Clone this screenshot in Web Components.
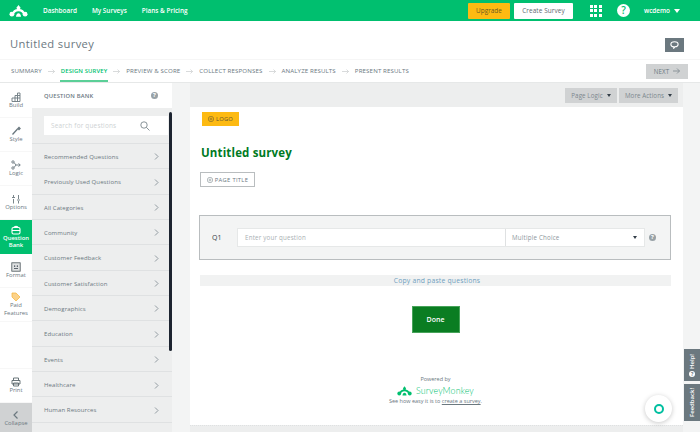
<!DOCTYPE html>
<html>
<head>
<meta charset="utf-8">
<title>Untitled survey</title>
<style>
  html, body { margin: 0; padding: 0; height: 432px; overflow: hidden; background: #fff; }
  body { font-family: "Open Sans", "Liberation Sans", sans-serif; color: #6b787f; }
</style>
</head>
<body>
<sm-app></sm-app>
<script>
const MONKEY = `<path d="M6 15c1-5 4-7 9-7s8 2 9 7" fill="none" stroke="currentColor" stroke-width="3.500"/><circle cx="4.500" cy="14.500" r="3.800" fill="currentColor"/><circle cx="25.500" cy="14.500" r="3.800" fill="currentColor"/><path d="M15 0l3 4-1 5h-4l-1-5z" fill="currentColor"/><path d="M11 18.500c0-3 2-5.500 4-5.500s4 2.500 4 5.500z" fill="currentColor"/>`;

function define(name, html, setup) {
  const tpl = document.createElement('template');
  tpl.innerHTML = html;
  customElements.define(name, class extends HTMLElement {
    constructor() {
      super();
      this.attachShadow({ mode: 'open' }).appendChild(tpl.content.cloneNode(true));
    }
    connectedCallback() {
      if (setup) setup(this);
    }
  });
}

define('sm-topbar', `
<style>
  :host { display: flex; align-items: center; height: 21px; background: #00bf6f; color: #fff; font-size: 6.400px; font-weight: 600; }
  svg.logo { width: 19px; height: 12px; margin-left: 9px; color: #fff; }
  nav { display: flex; gap: 15px; margin-left: 15px; }
  .right { margin-left: auto; display: flex; align-items: center; }
  .up { width: 42px; height: 16px; background: #fdba12; color: #6b5a20; border-radius: 1px; display: flex; align-items: center; justify-content: center; font-weight: 400; }
  .cs { width: 59px; height: 16px; margin-left: 4px; background: #fff; color: #5c686e; border-radius: 1px; display: flex; align-items: center; justify-content: center; font-weight: 400; letter-spacing: .1px; }
  .apps { display: grid; grid-template-columns: repeat(3, 3px); gap: 1.500px; margin-left: 17px; }
  .apps i { width: 3px; height: 3px; background: #fff; }
  .q { width: 13px; height: 13px; border-radius: 50%; background: #fff; color: #00bf6f; font-size: 10px; line-height: 13px; text-align: center; margin-left: 15px; }
  .user { margin-left: 14px; margin-right: 20px; display: flex; align-items: center; gap: 4px; }
  .user b { width: 0; height: 0; border: 3px solid transparent; border-top: 4px solid #fff; border-bottom: 0; }
</style>
<svg class="logo" viewBox="0 0 30 19">${MONKEY}</svg>
<nav><span>Dashboard</span><span>My Surveys</span><span>Plans &amp; Pricing</span></nav>
<div class="right">
  <div class="up">Upgrade</div>
  <div class="cs">Create Survey</div>
  <div class="apps"><i></i><i></i><i></i><i></i><i></i><i></i><i></i><i></i><i></i></div>
  <div class="q">?</div>
  <div class="user">wcdemo <b></b></div>
</div>`);

define('sm-titlebar', `
<style>
  :host { display: flex; height: 38px; background: #fff; box-sizing: border-box; padding: 0 16px 0 10px; justify-content: space-between; align-items: center; }
  h1 { margin: 6px 0 0; font-size: 11.200px; font-weight: 400; color: #6b787f; letter-spacing: .35px; }
  button { all: unset; width: 19px; height: 14px; margin-top: 10px; background: #6b787f; display: flex; align-items: center; justify-content: center; }
  svg { width: 9px; height: 8px; }
</style>
<h1>Untitled survey</h1>
<button><svg viewBox="0 0 12 11" fill="none" stroke="#fff" stroke-width="1.500"><path d="M6 1c3 0 5 1.500 5 3.500S9 8 6.500 8L5 10V8C3 8 1 6.500 1 4.500S3 1 6 1z"/></svg></button>`);

define('sm-steps', `
<style>
  :host { display: flex; align-items: stretch; height: 24px; background: #fff; box-sizing: border-box; border-top: 1px solid #f6f6f6; border-bottom: 1px solid #e6e8e8; padding-left: 11px; font-size: 6.150px; color: #6b787f; font-weight: 400; }
  span { display: flex; align-items: center; letter-spacing: .12px; white-space: nowrap; padding-bottom: 1px; box-sizing: border-box; }
  .on { color: #00bf6f; font-weight: 600; font-size: 5.900px; box-shadow: inset 0 -2px 0 #5bcf97; margin: 0 -1px; padding: 0 1px 1px; }
  svg { width: 7px; height: 5px; margin: 0 6px; align-self: center; }
  .next { margin-left: auto; margin-right: 12px; align-self: center; padding: 0; width: 42px; height: 15px; background: #d0d2d3; justify-content: center; gap: 4px; font-size: 6.200px; color: #6b787f; }
  .next svg { margin: 0; width: 7px; height: 6px; }
</style>
<span>SUMMARY</span><svg viewBox="0 0 7 5" fill="none" stroke="#c8cccd" stroke-width=".7"><path d="M0 2.500h6.500M4.500.5l2 2-2 2"/></svg>
<span class="on">DESIGN SURVEY</span><svg viewBox="0 0 7 5" fill="none" stroke="#c8cccd" stroke-width=".7"><path d="M0 2.500h6.500M4.500.5l2 2-2 2"/></svg>
<span>PREVIEW &amp; SCORE</span><svg viewBox="0 0 7 5" fill="none" stroke="#c8cccd" stroke-width=".7"><path d="M0 2.500h6.500M4.500.5l2 2-2 2"/></svg>
<span>COLLECT RESPONSES</span><svg viewBox="0 0 7 5" fill="none" stroke="#c8cccd" stroke-width=".7"><path d="M0 2.500h6.500M4.500.5l2 2-2 2"/></svg>
<span>ANALYZE RESULTS</span><svg viewBox="0 0 7 5" fill="none" stroke="#c8cccd" stroke-width=".7"><path d="M0 2.500h6.500M4.500.5l2 2-2 2"/></svg>
<span>PRESENT RESULTS</span>
<span class="next">NEXT <svg viewBox="0 0 7 6" fill="none" stroke="#7b878d" stroke-width=".8"><path d="M0 3h6.500M4 .5L6.500 3 4 5.500"/></svg></span>`);

define('sm-rail-item', `
<style>
  :host { display: flex; flex-direction: column; align-items: center; justify-content: center; height: 34px; box-sizing: border-box; border-bottom: 1px solid #f7f7f7; font-size: 5.900px; line-height: 7.500px; text-align: center; color: #6b787f; background: #fff; }
  :host([active]) { background: #00bf6f; color: #fff; font-weight: 600; border: 0; }
  :host([collapse]) { background: #d0d2d3; height: 29px; border: 0; margin-top: auto; padding-top: 2px; }
  ::slotted(svg) { width: 10px; height: 10px; margin-bottom: 0; }
</style>
<slot name="icon"></slot><slot></slot>`);

define('sm-rail', `
<style>
  :host { display: flex; flex-direction: column; width: 32px; flex: none; background: #fff; padding-top: 1px; box-sizing: border-box; }
  .gap { flex: 1; border-bottom: 1px solid #f7f7f7; }
</style>
<sm-rail-item><svg slot="icon" viewBox="0 0 10 10" fill="none" stroke="#6b787f" stroke-width=".9"><path d="M1 9.500V6h3V3.500h2.500V1H9v8.500zM4 6v3.500M6.500 3.500v6M4 6h5M6.500 3.500H9"/></svg>Build</sm-rail-item>
<sm-rail-item><svg slot="icon" viewBox="0 0 10 10" fill="none" stroke="#6b787f" stroke-width="1.300"><path d="M1.500 8.500l5-5.500M7 2.500l1-1 1 1-1 1z"/></svg>Style</sm-rail-item>
<sm-rail-item><svg slot="icon" viewBox="0 0 10 10" fill="none" stroke="#6b787f" stroke-width=".9"><circle cx="2" cy="2" r="1.200"/><circle cx="2" cy="8" r="1.200"/><path d="M3 2.500L5 5 3 7.500M5 5h4M7.500 3.500L9.300 5 7.500 6.500"/></svg>Logic</sm-rail-item>
<sm-rail-item><svg slot="icon" viewBox="0 0 10 10" fill="none" stroke="#6b787f" stroke-width=".9"><path d="M2.500 1v2M1 3.500h3M2.500 5v4.500M7.500 1v4M6 6h3M7.500 7v2.500"/></svg>Options</sm-rail-item>
<sm-rail-item active><svg slot="icon" viewBox="0 0 10 10" fill="none" stroke="#fff" stroke-width="1.100"><rect x="1" y="2.500" width="8" height="6.500" rx="1.500"/><path d="M1 5.500h8M3 2.500C3 1 7 1 7 2.500"/></svg>Question<br>Bank</sm-rail-item>
<sm-rail-item><svg slot="icon" viewBox="0 0 10 10"><rect x=".8" y=".8" width="8.400" height="8.400" fill="#dfe1e2" stroke="#4b565b" stroke-width=".8"/><path d="M3 3.500h1.200v1.200H3zM5.800 3.500H7v1.200H5.800zM3 6.300h4v.8H3z" fill="#333e48"/></svg>Format</sm-rail-item>
<sm-rail-item><svg slot="icon" viewBox="0 0 10 10"><path d="M1 1h4l4 4-4 4-4-4z" fill="#fbd28a" stroke="#f5b335" stroke-width=".7"/></svg>Paid<br>Features</sm-rail-item>
<div class="gap"></div>
<sm-rail-item><svg slot="icon" viewBox="0 0 10 10" fill="none" stroke="#5a666c" stroke-width=".9"><path d="M2.500 3.500V1h5v2.500M1 3.500h8V7H1zM2.500 6h5v3h-5z"/></svg>Print</sm-rail-item>
<sm-rail-item collapse><svg slot="icon" viewBox="0 0 10 10" fill="none" stroke="#6b787f" stroke-width="1.200"><path d="M6.500 1.500L3 5l3.500 3.500"/></svg>Collapse</sm-rail-item>`);

define('sm-bank-row', `
<style>
  :host { display: flex; align-items: center; justify-content: space-between; flex: none; height: 25.350px; box-sizing: border-box; border-bottom: 1px solid #dfe1e2; padding: 1.500px 13px 0 12px; font-size: 6px; color: #6b787f; letter-spacing: .1px; }
  svg { width: 5px; height: 7px; }
</style>
<slot></slot>
<svg viewBox="0 0 5 7" fill="none" stroke="#7b878d" stroke-width=".8"><path d="M1 .5l3 3-3 3"/></svg>`);

define('sm-bank', `
<style>
  :host { display: flex; flex-direction: column; width: 140px; flex: none; background: #edeeee; position: relative; overflow: hidden; }
  header { flex: none; height: 25px; box-sizing: border-box; background: #fff; display: flex; align-items: center; justify-content: space-between; padding: 0 14px 0 12px; font-size: 5.800px; font-weight: 600; color: #6b787f; letter-spacing: .2px; }
  header i { width: 7px; height: 7px; border-radius: 50%; background: #98a1a6; color: #fff; font: 700 6px/7px "Open Sans", sans-serif; text-align: center; }
  .search { flex: none; height: 36px; box-sizing: border-box; border-bottom: 1px solid #dfe1e2; padding: 8px 0 8px 12px; }
  .box { height: 19px; margin-right: 4px; background: #fff; display: flex; align-items: center; justify-content: space-between; padding: 0 18px 0 7px; font-size: 6.400px; color: #ced2d3; letter-spacing: .2px; }
  .box svg { width: 10px; height: 10px; }
  .thumb { position: absolute; right: 0; top: 29px; width: 3px; height: 239px; background: #1c2430; border-radius: 2px; z-index: 1; }
</style>
<header>QUESTION BANK <i>?</i></header>
<div class="search"><div class="box">Search for questions <svg viewBox="0 0 10 10" fill="none" stroke="#6b787f" stroke-width=".8"><circle cx="4" cy="4" r="3.200"/><path d="M6.400 6.400L9.500 9.500"/></svg></div></div>
<sm-bank-row>Recommended Questions</sm-bank-row>
<sm-bank-row>Previously Used Questions</sm-bank-row>
<sm-bank-row>All Categories</sm-bank-row>
<sm-bank-row>Community</sm-bank-row>
<sm-bank-row>Customer Feedback</sm-bank-row>
<sm-bank-row>Customer Satisfaction</sm-bank-row>
<sm-bank-row>Demographics</sm-bank-row>
<sm-bank-row>Education</sm-bank-row>
<sm-bank-row>Events</sm-bank-row>
<sm-bank-row>Healthcare</sm-bank-row>
<sm-bank-row>Human Resources</sm-bank-row>
<div class="thumb"></div>`);

define('sm-question', `
<style>
  :host { display: flex; align-items: center; height: 45px; box-sizing: border-box; margin: 0 12px 0 9px; background: #f3f4f4; border: 1px solid #b9bdbf; font-size: 6.500px; color: #333e48; }
  .n { width: 37px; padding-left: 12px; box-sizing: border-box; font-size: 7px; }
  .field { display: flex; width: 408px; height: 19px; background: #fff; border: 1px solid #e6e8e8; box-sizing: border-box; color: #a9b0b3; font-size: 6.200px; letter-spacing: .2px; align-items: center; }
  .q { width: 268px; padding-left: 7px; box-sizing: border-box; height: 100%; display: flex; align-items: center; border-right: 1px solid #dfe1e2; }
  .t { flex: 1; padding: 0 7px 0 6px; display: flex; justify-content: space-between; align-items: center; color: #8d979c; }
  .t b { width: 0; height: 0; border: 2px solid transparent; border-top: 3px solid #333e48; border-bottom: 0; }
  i { width: 7px; height: 7px; margin-left: 4px; border-radius: 50%; background: #98a1a6; color: #fff; font: 700 6px/7px "Open Sans", sans-serif; text-align: center; }
</style>
<span class="n">Q1</span>
<div class="field"><div class="q">Enter your question</div><div class="t">Multiple Choice <b></b></div></div>
<i>?</i>`);

define('sm-canvas', `
<style>
  :host { display: flex; flex-direction: column; flex: none; width: 493px; height: 318px; box-sizing: border-box; background: #fff; }
  .logo { align-self: flex-start; margin: 5px 0 0 12px; width: 37px; height: 14px; background: #fdba12; display: flex; align-items: center; justify-content: center; gap: 2px; font-size: 5.800px; font-weight: 400; color: #5c5230; letter-spacing: .2px; }
  .plus { width: 6px; height: 6px; }
  h2 { margin: 19px 0 0 11px; font-size: 11.500px; line-height: 16px; font-weight: 700; color: #007a1f; letter-spacing: .15px; }
  .pt { align-self: flex-start; margin: 11px 0 0 10px; width: 55px; height: 15px; box-sizing: border-box; border: 1px solid #b9bdbf; display: flex; align-items: center; justify-content: center; gap: 2px; font-size: 5.800px; font-weight: 400; color: #6b787f; letter-spacing: .3px; }
  sm-question { margin-top: 28px; }
  .copy { margin: 15px 12px 0 10px; padding-left: 3px; height: 11px; background: #f1f2f2; font-size: 6.800px; line-height: 11px; text-align: center; color: #6f9fbe; letter-spacing: .2px; }
  .done { align-self: center; margin: 20px 0 0 -2px; width: 48px; height: 27px; background: #0a7d22; border: 1px solid #47a35a; box-sizing: border-box; color: #fff; font-size: 7px; font-weight: 600; display: flex; align-items: center; justify-content: center; }
  .pow { margin: 43px 0 0; text-align: center; font-size: 5.500px; line-height: 7px; color: #6b787f; padding-right: 2px; }
  .brand { display: flex; justify-content: center; align-items: center; gap: 4px; height: 13px; margin: 1px 0; color: #00bf6f; font-size: 8.800px; font-weight: 300; letter-spacing: .15px; font-family: Lato, "Open Sans", sans-serif; }
  .brand svg { width: 15px; height: 10px; color: #00bf6f; }
  u { color: #6b787f; }
</style>
<div class="logo"><svg class="plus" viewBox="0 0 6 6" fill="none" stroke="#5c5230" stroke-width=".5"><circle cx="3" cy="3" r="2.700"/><path d="M3 1.500v3M1.500 3h3"/></svg>LOGO</div>
<h2>Untitled survey</h2>
<div class="pt"><svg class="plus" viewBox="0 0 6 6" fill="none" stroke="#6b787f" stroke-width=".5"><circle cx="3" cy="3" r="2.700"/><path d="M3 1.500v3M1.500 3h3"/></svg>PAGE TITLE</div>
<sm-question></sm-question>
<div class="copy">Copy and paste questions</div>
<div class="done">Done</div>
<div class="pow">
  <div>Powered by</div>
  <div class="brand"><svg viewBox="0 0 30 19">${MONKEY}</svg>SurveyMonkey</div>
  <div>See how easy it is to <u>create a survey</u>.</div>
</div>`);

define('sm-main', `
<style>
  :host { display: flex; flex-direction: column; flex: 1; background: #f3f4f4; min-width: 0; }
  .tools { flex: none; display: flex; justify-content: flex-end; gap: 2px; height: 24px; background: #edeeee; align-items: flex-start; padding: 5px 5px 0 0; box-sizing: border-box; margin-left: 18px; margin-right: 17px; font-size: 6.200px; color: #7b878d; }
  .tools span { display: flex; align-items: center; justify-content: center; gap: 4px; height: 15px; background: #d0d2d3; letter-spacing: .1px; }
  .tools b { width: 0; height: 0; border: 2.500px solid transparent; border-top: 3px solid #333e48; border-bottom: 0; }
  sm-canvas { margin-left: 18px; }
  .foot { flex: none; height: 7px; background: #edeeee; margin-left: 18px; margin-right: 17px; border-top: 1px dotted #dfe1e2; box-sizing: border-box; }
</style>
<div class="tools"><span style="width:52px">Page Logic <b></b></span><span style="width:59px">More Actions <b></b></span></div>
<sm-canvas></sm-canvas>
<div class="foot"></div>`);

define('sm-side-tabs', `
<style>
  :host { position: absolute; right: 0; top: 349px; width: 16px; display: flex; flex-direction: column; gap: 3px; }
  div { background: #6b787f; color: #fff; writing-mode: vertical-rl; transform: rotate(180deg); display: flex; align-items: center; justify-content: center; font-size: 6px; font-weight: 600; gap: 2px; }
  i { width: 6px; height: 6px; border-radius: 50%; background: #fff; color: #6b787f; font: 700 5px/6px "Open Sans", sans-serif; text-align: center; transform: rotate(90deg); }
</style>
<div style="height:32px"><i>?</i>Help!</div>
<div style="height:37px">Feedback!</div>`);

define('sm-fab', `
<style>
  :host { position: absolute; left: 645px; top: 395px; width: 27px; height: 27px; border-radius: 50%; background: #fff; box-shadow: 0 1px 5px rgba(0,0,0,.22); display: flex; align-items: center; justify-content: center; }
  i { width: 6px; height: 6px; border: 2px solid #00bfa0; border-radius: 50%; }
</style>
<i></i>`);

define('sm-app', `
<style>
  :host { display: flex; flex-direction: column; position: relative; width: 700px; height: 432px; overflow: hidden; }
  .body { display: flex; flex: 1; min-height: 0; }
</style>
<sm-topbar></sm-topbar>
<sm-titlebar></sm-titlebar>
<sm-steps></sm-steps>
<div class="body"><sm-rail></sm-rail><sm-bank></sm-bank><sm-main></sm-main></div>
<sm-side-tabs></sm-side-tabs>
<sm-fab></sm-fab>`);
</script>
</body>
</html>
